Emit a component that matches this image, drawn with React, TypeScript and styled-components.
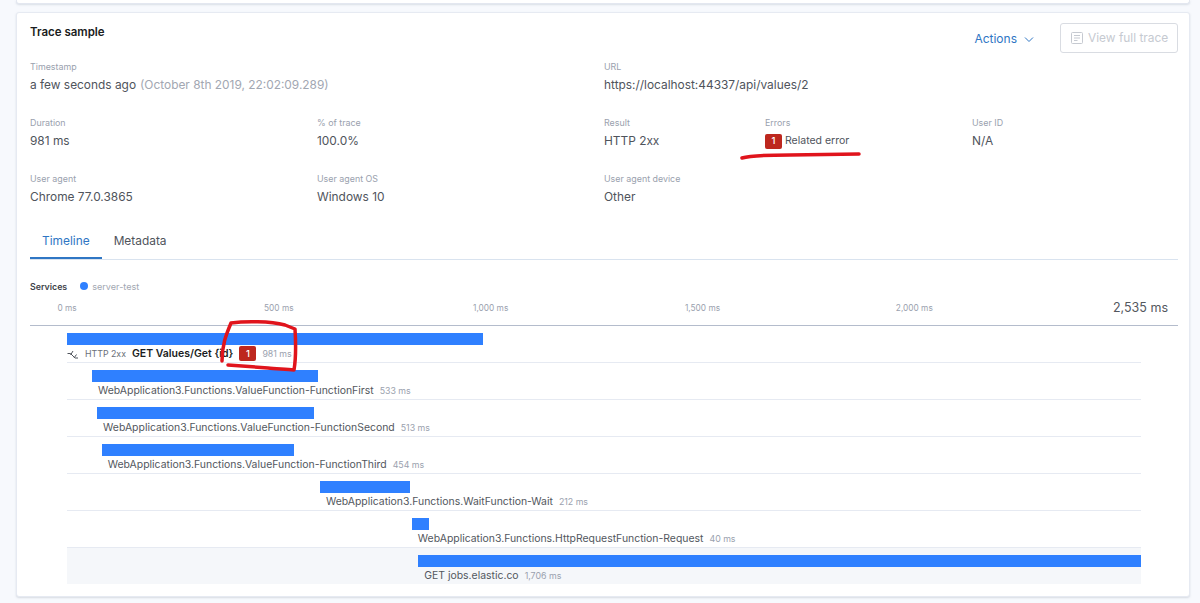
import styled, { createGlobalStyle } from "styled-components";

const PX_PER_MS = 1074 / 2535;

const GlobalStyle = createGlobalStyle`
  html, body {
    margin: 0;
    padding: 0;
    background: #f7f9fd;
    font-family: Inter, "Noto Sans", sans-serif;
    color: #4a4f57;
    overflow: hidden;
  }
`;

const Page = styled.div`
  position: relative;
  width: 1200px;
  height: 603px;
  overflow: hidden;
  padding: 0 10px 0 16px;
  box-sizing: border-box;
`;

const TopSliver = styled.div`
  height: 4px;
  background: #fff;
  border: 1px solid #e3e7f0;
  border-top: 0;
  border-radius: 0 0 3px 3px;
  box-shadow: 0 1px 2px rgba(152, 162, 179, 0.3);
  box-sizing: border-box;
`;

const Card = styled.section`
  margin-top: 8px;
  height: 585px;
  box-sizing: border-box;
  background: #fff;
  border: 1px solid #e6eaf2;
  border-radius: 3px;
  box-shadow: 0 1px 2px rgba(152, 162, 179, 0.35);
  padding: 9px 11px 0 13px;
`;

const Header = styled.div`
  display: flex;
  align-items: flex-start;
  height: 38px;
`;

const Title = styled.h2`
  margin: 2px 0 0;
  flex: 1;
  font-size: 11.5px;
  line-height: 16px;
  font-weight: 600;
  color: #1a1c21;
`;

const ActionsButton = styled.button`
  display: flex;
  align-items: center;
  gap: 6px;
  margin: 8px 25px 0 0;
  padding: 0;
  border: 0;
  background: none;
  color: #2f76c4;
  font: 400 12px/18px Inter, sans-serif;
`;

const FullTraceButton = styled.button`
  display: flex;
  align-items: center;
  gap: 4px;
  width: 118px;
  height: 30px;
  margin-top: 1px;
  padding: 0 0 0 9px;
  box-sizing: border-box;
  border: 1px solid #d9dce2;
  border-radius: 3px;
  background: #fff;
  color: #c6cad1;
  font: 400 11.9px/18px Inter, sans-serif;
`;

const MetaGrid = styled.div`
  display: grid;
  grid-template-columns: 287px 287px 161px 207px 1fr;
  grid-auto-rows: 56px;
`;

const MetaCell = styled.div<{ $span?: number }>`
  grid-column: span ${(p) => p.$span ?? 1};
`;

const MetaLabel = styled.div`
  font-size: 8.9px;
  line-height: 14px;
  color: #9aa1ae;
`;

const MetaValue = styled.div`
  display: flex;
  align-items: center;
  margin-top: 2px;
  font-size: 11.9px;
  line-height: 18px;
  color: #4f545c;
`;

const Muted = styled.span`
  margin-left: 4px;
  color: #a2a7b2;
`;

const ErrorBadge = styled.span`
  display: inline-flex;
  align-items: center;
  justify-content: center;
  width: 17px;
  height: 15px;
  border-radius: 2px;
  background: #bd271e;
  color: #fff;
  font-size: 9.5px;
  font-weight: 500;
`;

const ErrorLink = styled.span`
  margin-left: 3px;
  font-size: 10.5px;
`;

const Tabs = styled.div`
  display: flex;
  height: 34px;
  margin-top: -3px;
  border-bottom: 1px solid #d9e3ef;
`;

const Tab = styled.div<{ $active?: boolean }>`
  padding: 0 12px;
  height: 34px;
  line-height: 32px;
  box-sizing: border-box;
  font-size: 11.9px;
  color: ${(p) => (p.$active ? "#2f76c4" : "#4f545c")};
  border-bottom: 2px solid ${(p) => (p.$active ? "#2f76c4" : "transparent")};
`;

const Services = styled.div`
  display: flex;
  align-items: center;
  margin-top: 19px;
  height: 14px;
  font-size: 9.1px;
  color: #a2a7b2;
`;

const ServicesTitle = styled.span`
  font-size: 8.8px;
  font-weight: 600;
  color: #3e4249;
  margin-right: 13px;
`;

const Dot = styled.span`
  width: 8px;
  height: 8px;
  border-radius: 50%;
  background: #2f80ff;
  margin-right: 4px;
`;

const Ruler = styled.div`
  display: flex;
  align-items: flex-start;
  height: 33px;
  padding-top: 8px;
  border-bottom: 1px solid #b4bccc;
  box-sizing: border-box;
`;

const Tick = styled.div`
  width: ${500 * PX_PER_MS}px;
  flex: none;
  text-align: center;
  font-size: 8.3px;
  line-height: 14px;
  color: #9aa1ae;
  &:first-child {
    margin-left: ${37 - 250 * PX_PER_MS}px;
  }
`;

const TotalTime = styled.div`
  margin-left: auto;
  margin-right: 10px;
  font-size: 12.5px;
  line-height: 14px;
  color: #53575e;
`;

const Rows = styled.div`
  width: 1074px;
  margin-left: 37px;
`;

const Row = styled.div<{ $shaded?: boolean }>`
  height: 37px;
  box-sizing: border-box;
  padding-top: 7px;
  border-bottom: 1px solid #e6eaf2;
  background: ${(p) => (p.$shaded ? "#f5f7fa" : "#fff")};
  &:last-child {
    height: 36px;
    border-bottom: 0;
  }
`;

const Bar = styled.div`
  height: 12px;
  background: #2f80ff;
`;

const RowLabel = styled.div<{ $root?: boolean }>`
  display: flex;
  align-items: center;
  height: 17px;
  padding-left: ${(p) => (p.$root ? 0 : 6)}px;
  white-space: nowrap;
`;

const SpanName = styled.span`
  font-size: 10.43px;
  color: #53575e;
`;

const RootName = styled.span`
  font-size: 10.5px;
  font-weight: 600;
  color: #1a1c21;
  margin: 0 6px;
`;

const Duration = styled.span`
  margin-left: 6px;
  font-size: 8.8px;
  color: #9aa1ae;
`;

const HttpResult = styled.span`
  margin-left: 6px;
  font-size: 8.8px;
  color: #6a6f78;
`;

const Annotations = styled.svg`
  position: absolute;
  left: 0;
  top: 0;
  pointer-events: none;
`;

const spans = [
  { name: "WebApplication3.Functions.ValueFunction-FunctionFirst", start: 59, ms: 533 },
  { name: "WebApplication3.Functions.ValueFunction-FunctionSecond", start: 71, ms: 513 },
  { name: "WebApplication3.Functions.ValueFunction-FunctionThird", start: 82, ms: 454 },
  { name: "WebApplication3.Functions.WaitFunction-Wait", start: 597, ms: 212 },
  { name: "WebApplication3.Functions.HttpRequestFunction-Request", start: 814, ms: 40 },
  { name: "GET jobs.elastic.co", start: 829, ms: 1706, shaded: true, duration: "1,706 ms" },
];

function TraceIcon() {
  return (
    <svg width="12" height="12" viewBox="0 0 12 12" fill="none" stroke="#4f545c" strokeWidth="1">
      <path d="M.5 5.500h3L8 10h3M6 3L3.500 7M9.500 6.500L7 10" />
    </svg>
  );
}

function DocIcon() {
  return (
    <svg width="14" height="14" viewBox="0 0 14 14" fill="none" stroke="#c6cad1" strokeWidth="1">
      <rect x="1.500" y="1.500" width="11" height="11" rx="1" />
      <path d="M4 4.500h6M4 7h6M4 9.500h3.500" />
    </svg>
  );
}

function Chevron() {
  return (
    <svg width="12" height="12" viewBox="0 0 12 12" fill="none" stroke="#2f76c4" strokeWidth="1">
      <path d="M2 4.500l4 4 4-4" />
    </svg>
  );
}

function App() {
  return (
    <Page>
      <GlobalStyle />
      <TopSliver />
      <Card>
        <Header>
          <Title>Trace sample</Title>
          <ActionsButton>
            Actions <Chevron />
          </ActionsButton>
          <FullTraceButton disabled>
            <DocIcon />
            View full trace
          </FullTraceButton>
        </Header>
        <MetaGrid>
          <MetaCell $span={2}>
            <MetaLabel>Timestamp</MetaLabel>
            <MetaValue>
              a few seconds ago<Muted>(October 8th 2019, 22:02:09.289)</Muted>
            </MetaValue>
          </MetaCell>
          <MetaCell $span={3}>
            <MetaLabel>URL</MetaLabel>
            <MetaValue>https://localhost:44337/api/values/2</MetaValue>
          </MetaCell>
          <MetaCell>
            <MetaLabel>Duration</MetaLabel>
            <MetaValue>981 ms</MetaValue>
          </MetaCell>
          <MetaCell>
            <MetaLabel>% of trace</MetaLabel>
            <MetaValue>100.0%</MetaValue>
          </MetaCell>
          <MetaCell>
            <MetaLabel>Result</MetaLabel>
            <MetaValue>HTTP 2xx</MetaValue>
          </MetaCell>
          <MetaCell>
            <MetaLabel>Errors</MetaLabel>
            <MetaValue>
              <ErrorBadge>1</ErrorBadge>
              <ErrorLink>Related error</ErrorLink>
            </MetaValue>
          </MetaCell>
          <MetaCell>
            <MetaLabel>User ID</MetaLabel>
            <MetaValue>N/A</MetaValue>
          </MetaCell>
          <MetaCell>
            <MetaLabel>User agent</MetaLabel>
            <MetaValue>Chrome 77.0.3865</MetaValue>
          </MetaCell>
          <MetaCell>
            <MetaLabel>User agent OS</MetaLabel>
            <MetaValue>Windows 10</MetaValue>
          </MetaCell>
          <MetaCell $span={3}>
            <MetaLabel>User agent device</MetaLabel>
            <MetaValue>Other</MetaValue>
          </MetaCell>
        </MetaGrid>
        <Tabs>
          <Tab $active>Timeline</Tab>
          <Tab>Metadata</Tab>
        </Tabs>
        <Services>
          <ServicesTitle>Services</ServicesTitle>
          <Dot />
          server-test
        </Services>
        <Ruler>
          <Tick>0 ms</Tick>
          <Tick>500 ms</Tick>
          <Tick>1,000 ms</Tick>
          <Tick>1,500 ms</Tick>
          <Tick>2,000 ms</Tick>
          <TotalTime>2,535 ms</TotalTime>
        </Ruler>
        <Rows>
          <Row>
            <Bar style={{ width: 981 * PX_PER_MS }} />
            <RowLabel $root>
              <TraceIcon />
              <HttpResult>HTTP 2xx</HttpResult>
              <RootName>GET Values/Get {"{id}"}</RootName>
              <ErrorBadge>1</ErrorBadge>
              <Duration>981 ms</Duration>
            </RowLabel>
          </Row>
          {spans.map((s) => (
            <Row key={s.name} $shaded={s.shaded}>
              <Bar style={{ marginLeft: s.start * PX_PER_MS, width: s.ms * PX_PER_MS }} />
              <RowLabel style={{ marginLeft: s.start * PX_PER_MS }}>
                <SpanName>{s.name}</SpanName>
                <Duration>{s.duration ?? `${s.ms} ms`}</Duration>
              </RowLabel>
            </Row>
          ))}
        </Rows>
      </Card>
      <Annotations width="1200" height="603" fill="none" stroke="#e0141c" strokeWidth="3.5" strokeLinecap="round" strokeLinejoin="round">
        <path d="M742 158C752 155 770 155 790 155L859 154" />
        <path d="M222 361C222 345 226 335 231 323C245 321 270 321 285 325L295 329C296 345 296 358 294 370C285 369 275 369 268 368L228 365" />
      </Annotations>
    </Page>
  );
}

export default App;
